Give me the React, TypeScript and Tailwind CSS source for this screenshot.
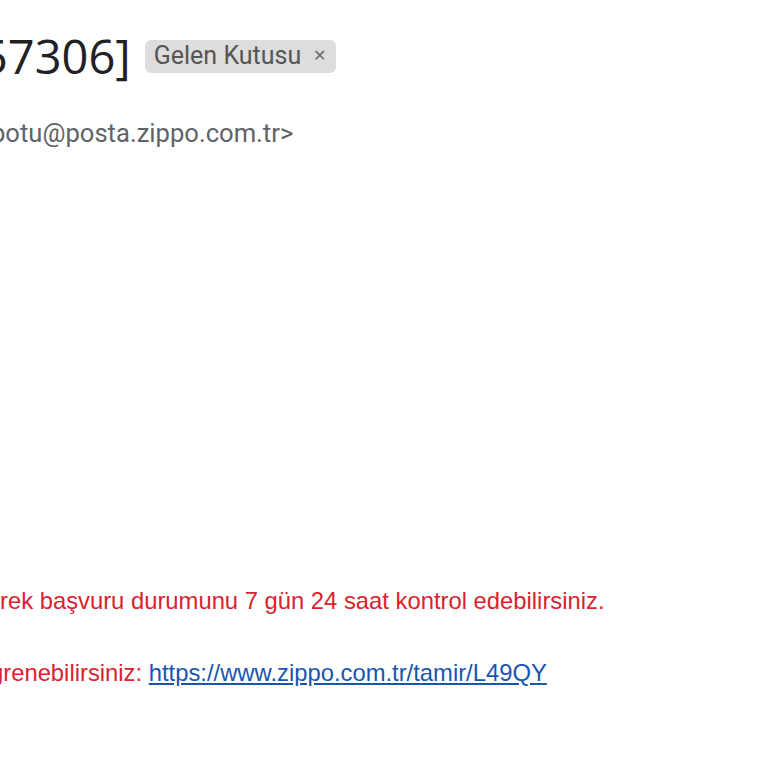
export default function App() {
  return (
    <div className="h-[768px] w-full overflow-hidden bg-white">
      <div className="flex items-center gap-[14px] pt-[26px]">
        <h1 className="-ml-[19px] font-['Open_Sans',sans-serif] text-[47px] leading-[60px] font-normal text-[#202124]">
          57306]
        </h1>
        <span className="flex h-[33px] items-center gap-3 rounded-md bg-[#dddddd] pr-[10px] pl-[9px] font-['Roboto',sans-serif] text-[25px] text-[#555]">
          Gelen Kutusu
          <span className="text-[16px] text-[#666]">✕</span>
        </span>
      </div>
      <div className="mt-[31px] -ml-[9px] font-['Roboto',sans-serif] text-[25.6px] leading-[32px] text-[#5f6368]">
        botu@posta.zippo.com.tr&gt;
      </div>
      <div className="mt-[437px] font-['Liberation_Sans',Arial,sans-serif] text-[23.8px] leading-[30px] text-[#d8232f]">
        rek başvuru durumunu 7 gün 24 saat kontrol edebilirsiniz.
      </div>
      <div className="mt-[42px] -ml-[10px] font-['Liberation_Sans',Arial,sans-serif] text-[23.8px] leading-[30px] text-[#d8232f]">
        ğrenebilirsiniz:{" "}
        <a href="#" className="text-[#1a55b0] underline">
          https://www.zippo.com.tr/tamir/L49QY
        </a>
      </div>
    </div>
  );
}
